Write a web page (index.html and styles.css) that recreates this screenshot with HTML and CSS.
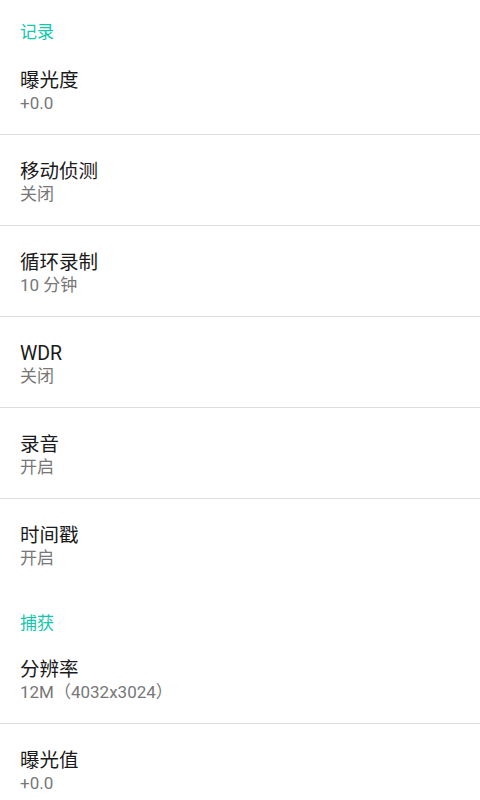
FILE: index.html
```html
<!DOCTYPE html>
<html lang="zh-CN">
<head>
<meta charset="utf-8">
<link rel="stylesheet" href="styles.css">
</head>
<body>
<div class="list">
  <div class="header first">记录</div>
  <div class="item"><div class="title">曝光度</div><div class="sub">+0.0</div></div>
  <div class="item"><div class="title">移动侦测</div><div class="sub">关闭</div></div>
  <div class="item"><div class="title">循环录制</div><div class="sub">10 分钟</div></div>
  <div class="item"><div class="title">WDR</div><div class="sub">关闭</div></div>
  <div class="item"><div class="title">录音</div><div class="sub">开启</div></div>
  <div class="item last"><div class="title">时间戳</div><div class="sub">开启</div></div>
  <div class="header">捕获</div>
  <div class="item"><div class="title">分辨率</div><div class="sub">12M（4032x3024）</div></div>
  <div class="item"><div class="title">曝光值</div><div class="sub">+0.0</div></div>
</div>
</body>
</html>
```
FILE: styles.css
```css
html, body {
  margin: 0;
  padding: 0;
  background: #ffffff;
}
body {
  width: 480px;
  height: 800px;
  overflow: hidden;
  font-family: Roboto, "Noto Sans CJK SC", sans-serif;
}
.list {
  display: flex;
  flex-direction: column;
}
.header {
  height: 44px;
  box-sizing: border-box;
  padding: 25px 20px 0;
  font-size: 17px;
  line-height: 19px;
  color: #12c7ab;
}
.header.first {
  padding-top: 23px;
}
.item {
  padding: 25px 20px 21px;
  border-bottom: 1px solid #dedcde;
}
.item.last {
  border-bottom: none;
}
.title {
  font-size: 19.5px;
  line-height: 24px;
  color: #1a1a1a;
}
.sub {
  margin-top: 0;
  font-size: 17px;
  line-height: 20px;
  color: #777777;
}
```
